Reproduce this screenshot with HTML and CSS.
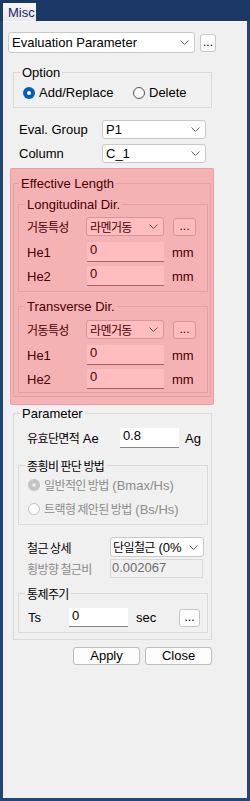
FILE: index.html
```html
<!DOCTYPE html>
<html>
<head>
<meta charset="utf-8">
<link rel="stylesheet" href="styles.css">
</head>
<body>
<div class="window">
  <div class="titlebar"><div class="tab">Misc</div></div>
  <div class="panel">
    <div class="row top-row">
      <div class="combo w-eval"><span class="ctext">Evaluation Parameter</span><svg class="chev" width="9" height="5" viewBox="0 0 9 5"><path d="M0.5 0.5 L4.5 4.5 L8.5 0.5" fill="none" stroke="#606060" stroke-width="1"/></svg></div>
      <div class="dots d-eval">...</div>
    </div>

    <fieldset class="grp g-option">
      <legend>Option</legend>
      <div class="radio-row">
        <div class="radio-item first"><span class="radio checked"></span><span>Add/Replace</span></div>
        <div class="radio-item"><span class="radio"></span><span>Delete</span></div>
      </div>
    </fieldset>

    <div class="eval-rows">
      <div class="lrow h19"><span class="lab w83">Eval. Group</span><div class="combo w-p1"><span class="ctext">P1</span><svg class="chev" width="9" height="5" viewBox="0 0 9 5"><path d="M0.5 0.5 L4.5 4.5 L8.5 0.5" fill="none" stroke="#606060" stroke-width="1"/></svg></div></div>
      <div class="lrow h19"><span class="lab w83">Column</span><div class="combo w-p1"><span class="ctext">C_1</span><svg class="chev" width="9" height="5" viewBox="0 0 9 5"><path d="M0.5 0.5 L4.5 4.5 L8.5 0.5" fill="none" stroke="#606060" stroke-width="1"/></svg></div></div>
    </div>

    <div class="pink-wrap">
      <fieldset class="grp g-eff">
        <legend>Effective Length</legend>
        <fieldset class="grp g-dir long">
          <legend>Longitudinal Dir.</legend>
          <div class="lrow h19"><span class="lab w59 ko">거동특성</span><div class="combo w-beh"><span class="ctext ko">라멘거동</span><svg class="chev" width="9" height="5" viewBox="0 0 9 5"><path d="M0.5 0.5 L4.5 4.5 L8.5 0.5" fill="none" stroke="#606060" stroke-width="1"/></svg></div><div class="dots d-beh">...</div></div>
          <div class="lrow h20 mt6"><span class="lab w60">He1</span><div class="edit w77">0</div><span class="unit">mm</span></div>
          <div class="lrow h20 mt4"><span class="lab w60">He2</span><div class="edit w77">0</div><span class="unit">mm</span></div>
        </fieldset>
        <fieldset class="grp g-dir trans">
          <legend>Transverse Dir.</legend>
          <div class="lrow h19"><span class="lab w59 ko">거동특성</span><div class="combo w-beh"><span class="ctext ko">라멘거동</span><svg class="chev" width="9" height="5" viewBox="0 0 9 5"><path d="M0.5 0.5 L4.5 4.5 L8.5 0.5" fill="none" stroke="#606060" stroke-width="1"/></svg></div><div class="dots d-beh">...</div></div>
          <div class="lrow h20 mt6"><span class="lab w60">He1</span><div class="edit w77">0</div><span class="unit">mm</span></div>
          <div class="lrow h20 mt4"><span class="lab w60">He2</span><div class="edit w77">0</div><span class="unit">mm</span></div>
        </fieldset>
      </fieldset>
      <div class="pink-overlay"></div>
    </div>

    <fieldset class="grp g-param">
      <legend>Parameter</legend>
      <div class="lrow h20 pl9"><span class="lab w93"><span class="ko">유효단면적</span> Ae</span><div class="edit w59">0.8</div><span class="unit u-ag">Ag</span></div>

      <fieldset class="grp g-sub g-ratio">
        <legend class="ko">종횡비 판단 방법</legend>
        <div class="radio-row"><div class="radio-item dis"><span class="radio checked dis"></span><span><span class="ko">일반적인 방법</span> (Bmax/Hs)</span></div></div>
        <div class="radio-row mt9"><div class="radio-item dis"><span class="radio dis"></span><span><span class="ko">트랙형 제안된 방법</span> (Bs/Hs)</span></div></div>
      </fieldset>

      <div class="lrow h20 pl9 mt12"><span class="lab w83 ko">철근 상세</span><div class="combo w-rebar"><span class="ctext"><span class="ko">단일철근</span> (0%</span><svg class="chev" width="9" height="5" viewBox="0 0 9 5"><path d="M0.5 0.5 L4.5 4.5 L8.5 0.5" fill="none" stroke="#606060" stroke-width="1"/></svg></div></div>
      <div class="lrow h19 pl9 mt2"><span class="lab w83 ko gray">횡방향 철근비</span><div class="ro w93">0.002067</div></div>

      <fieldset class="grp g-sub g-ctrl">
        <legend class="ko">통제주기</legend>
        <div class="lrow h19"><span class="lab w41">Ts</span><div class="edit w59">0</div><span class="unit u-sec">sec</span><div class="dots d-ts">...</div></div>
      </fieldset>
    </fieldset>

    <div class="btns">
      <div class="btn">Apply</div>
      <div class="btn">Close</div>
    </div>
  </div>
</div>
</body>
</html>
```

FILE: styles.css
```css
html, body {
  margin: 0;
  padding: 0;
}
body {
  width: 250px;
  height: 801px;
  background: #1f4677;
  font-family: "Liberation Sans", "Noto Sans CJK KR", sans-serif;
  font-size: 13px;
  color: #000;
  overflow: hidden;
}
.window {
  display: flex;
  flex-direction: column;
  height: 801px;
}
.titlebar {
  height: 21px;
  padding: 3px 0 0 3px;
  box-sizing: border-box;
  background: #1b3866;
  flex: none;
}
.tab {
  width: 33px;
  height: 18px;
  background: linear-gradient(#f7f7f7, #e9e9e9);
  color: #1c1c6e;
  line-height: 19px;
  padding-left: 5px;
  box-sizing: border-box;
}
.panel {
  margin: 0 3px;
  height: 777px;
  background: #f0f0f0;
  padding: 11px 0 0 5px;
  box-sizing: border-box;
  box-shadow: inset 0 1px #fbfbfb;
  flex: none;
}
.ko {
  font-family: "Noto Sans CJK KR", sans-serif;
  font-size: 12px;
  letter-spacing: -0.6px;
}
.row, .lrow {
  display: flex;
  align-items: center;
}
.top-row { height: 21px; }
.h19 { height: 19px; }
.h20 { height: 20px; }
.mt2 { margin-top: 2px; }
.mt4 { margin-top: 4px; }
.mt6 { margin-top: 6px; }
.mt9 { margin-top: 9px; }
.mt12 { margin-top: 12px; }
.pl9 { padding-left: 9px; }
.lab {
  flex: none;
  white-space: nowrap;
  line-height: 15px;
}
.w41 { width: 41px; }
.w59 { width: 59px; }
.w60 { width: 60px; }
.w83 { width: 83px; }
.w93 { width: 93px; }
.gray { color: #8a8a8a; }

.combo {
  display: flex;
  align-items: center;
  justify-content: space-between;
  background: #fff;
  border: 1px solid #c9c9c9;
  border-radius: 3px;
  box-sizing: border-box;
  padding: 0 5px 0 3px;
  overflow: hidden;
  white-space: nowrap;
  flex: none;
}
.ctext {
  overflow: hidden;
  line-height: 15px;
}
.chev { flex: none; }
.w-eval { width: 187px; height: 21px; }
.w-p1 { width: 104px; height: 19px; }
.w-beh { width: 78px; height: 19px; }
.w-rebar { width: 94px; height: 20px; padding-left: 2px; }

.dots {
  flex: none;
  border: 1px solid #c6c6c6;
  border-radius: 3px;
  background: #fdfdfd;
  box-sizing: border-box;
  text-align: center;
  font-size: 12px;
  line-height: 14px;
}
.d-eval { width: 16px; height: 18px; margin-left: 5px; }
.d-beh { width: 23px; height: 18px; margin-left: 9px; }
.d-ts { width: 21px; height: 18px; }

.edit {
  flex: none;
  background: #fff;
  border-bottom: 1px solid #868686;
  box-sizing: border-box;
  padding: 1px 3px 0;
  line-height: 14px;
  align-self: stretch;
}
.w77 { width: 77px; }
.w59.edit { width: 59px; }
.unit {
  margin-left: 8px;
  line-height: 15px;
}
.u-ag { margin-left: 6px; }
.u-sec { width: 43px; flex: none; }

.ro {
  flex: none;
  height: 19px;
  background: #f0f0f0;
  border: 1px solid #d9d9d9;
  box-sizing: border-box;
  padding-left: 1px;
  line-height: 15px;
  color: #6d6d6d;
}

.grp {
  border: 1px solid #d9d9d9;
  box-sizing: border-box;
  min-width: 0;
}
.grp > legend {
  padding: 0 2px;
  line-height: 15px;
  height: 15px;
  white-space: nowrap;
}
.g-option {
  margin: 12px 0 0 5px;
  width: 199px;
  padding: 5px 0 7px 9px;
}
.g-option > legend { margin-left: -3px; }

.radio-row {
  display: flex;
  align-items: center;
  height: 15px;
}
.radio-item {
  display: flex;
  align-items: center;
  gap: 4px;
  line-height: 15px;
  white-space: nowrap;
}
.radio-item.first { width: 110px; flex: none; }
.radio-item.dis { color: #8d8d8d; }
.radio {
  width: 12px;
  height: 12px;
  border-radius: 50%;
  box-sizing: border-box;
  border: 1px solid #555;
  background: #f9f9f9;
  flex: none;
}
.radio.checked {
  border: none;
  background: #fff;
  box-shadow: inset 0 0 0 4px #005fb8;
}
.radio.dis {
  border: 1px solid #c4c4c4;
  background: #fcfcfc;
}
.radio.checked.dis {
  border: none;
  background: #e8e8e8;
  box-shadow: inset 0 0 0 4px #c4c4c4;
}

.eval-rows {
  margin: 12px 0 0 11px;
  display: flex;
  flex-direction: column;
  gap: 5px;
}

.pink-wrap {
  position: relative;
  margin: 13px 0 0 5px;
  width: 198px;
}
.pink-overlay {
  position: absolute;
  top: -8px;
  left: -3px;
  right: -3px;
  bottom: -8px;
  background: rgba(255, 0, 8, 0.26);
  border-radius: 2px;
  box-shadow: inset 0 0 0 1px rgba(220, 60, 60, 0.18);
  pointer-events: none;
}
.g-eff {
  margin: 0;
  width: 198px;
  padding: 6px 0 3px 4px;
}
.g-eff > legend { margin-left: 1px; }
.g-dir {
  margin: 0;
  width: 190px;
  padding: 5px 0 5px 8px;
}
.g-dir > legend { margin-left: -2px; }
.g-dir.trans {
  margin-top: 7px;
  padding-top: 6px;
  padding-bottom: 3px;
}

.g-param {
  margin: 9px 0 0 5px;
  width: 199px;
  padding: 7px 0 6px 4px;
}
.g-param > legend { margin-left: 2px; }
.g-sub {
  margin: 0;
  width: 190px;
  padding: 4px 0 8px 9px;
}
.g-sub > legend { margin-left: -3px; }
.g-ratio { margin-top: 10px; }
.g-ctrl {
  margin-top: 8px;
  padding: 7px 0 5px 9px;
}

.btns {
  margin: 7px 0 0 65px;
  display: flex;
  gap: 5px;
}
.btn {
  width: 67px;
  height: 18px;
  box-sizing: border-box;
  border: 1px solid #bdbdbd;
  border-radius: 3px;
  background: #fdfdfd;
  text-align: center;
  line-height: 16px;
}
```
